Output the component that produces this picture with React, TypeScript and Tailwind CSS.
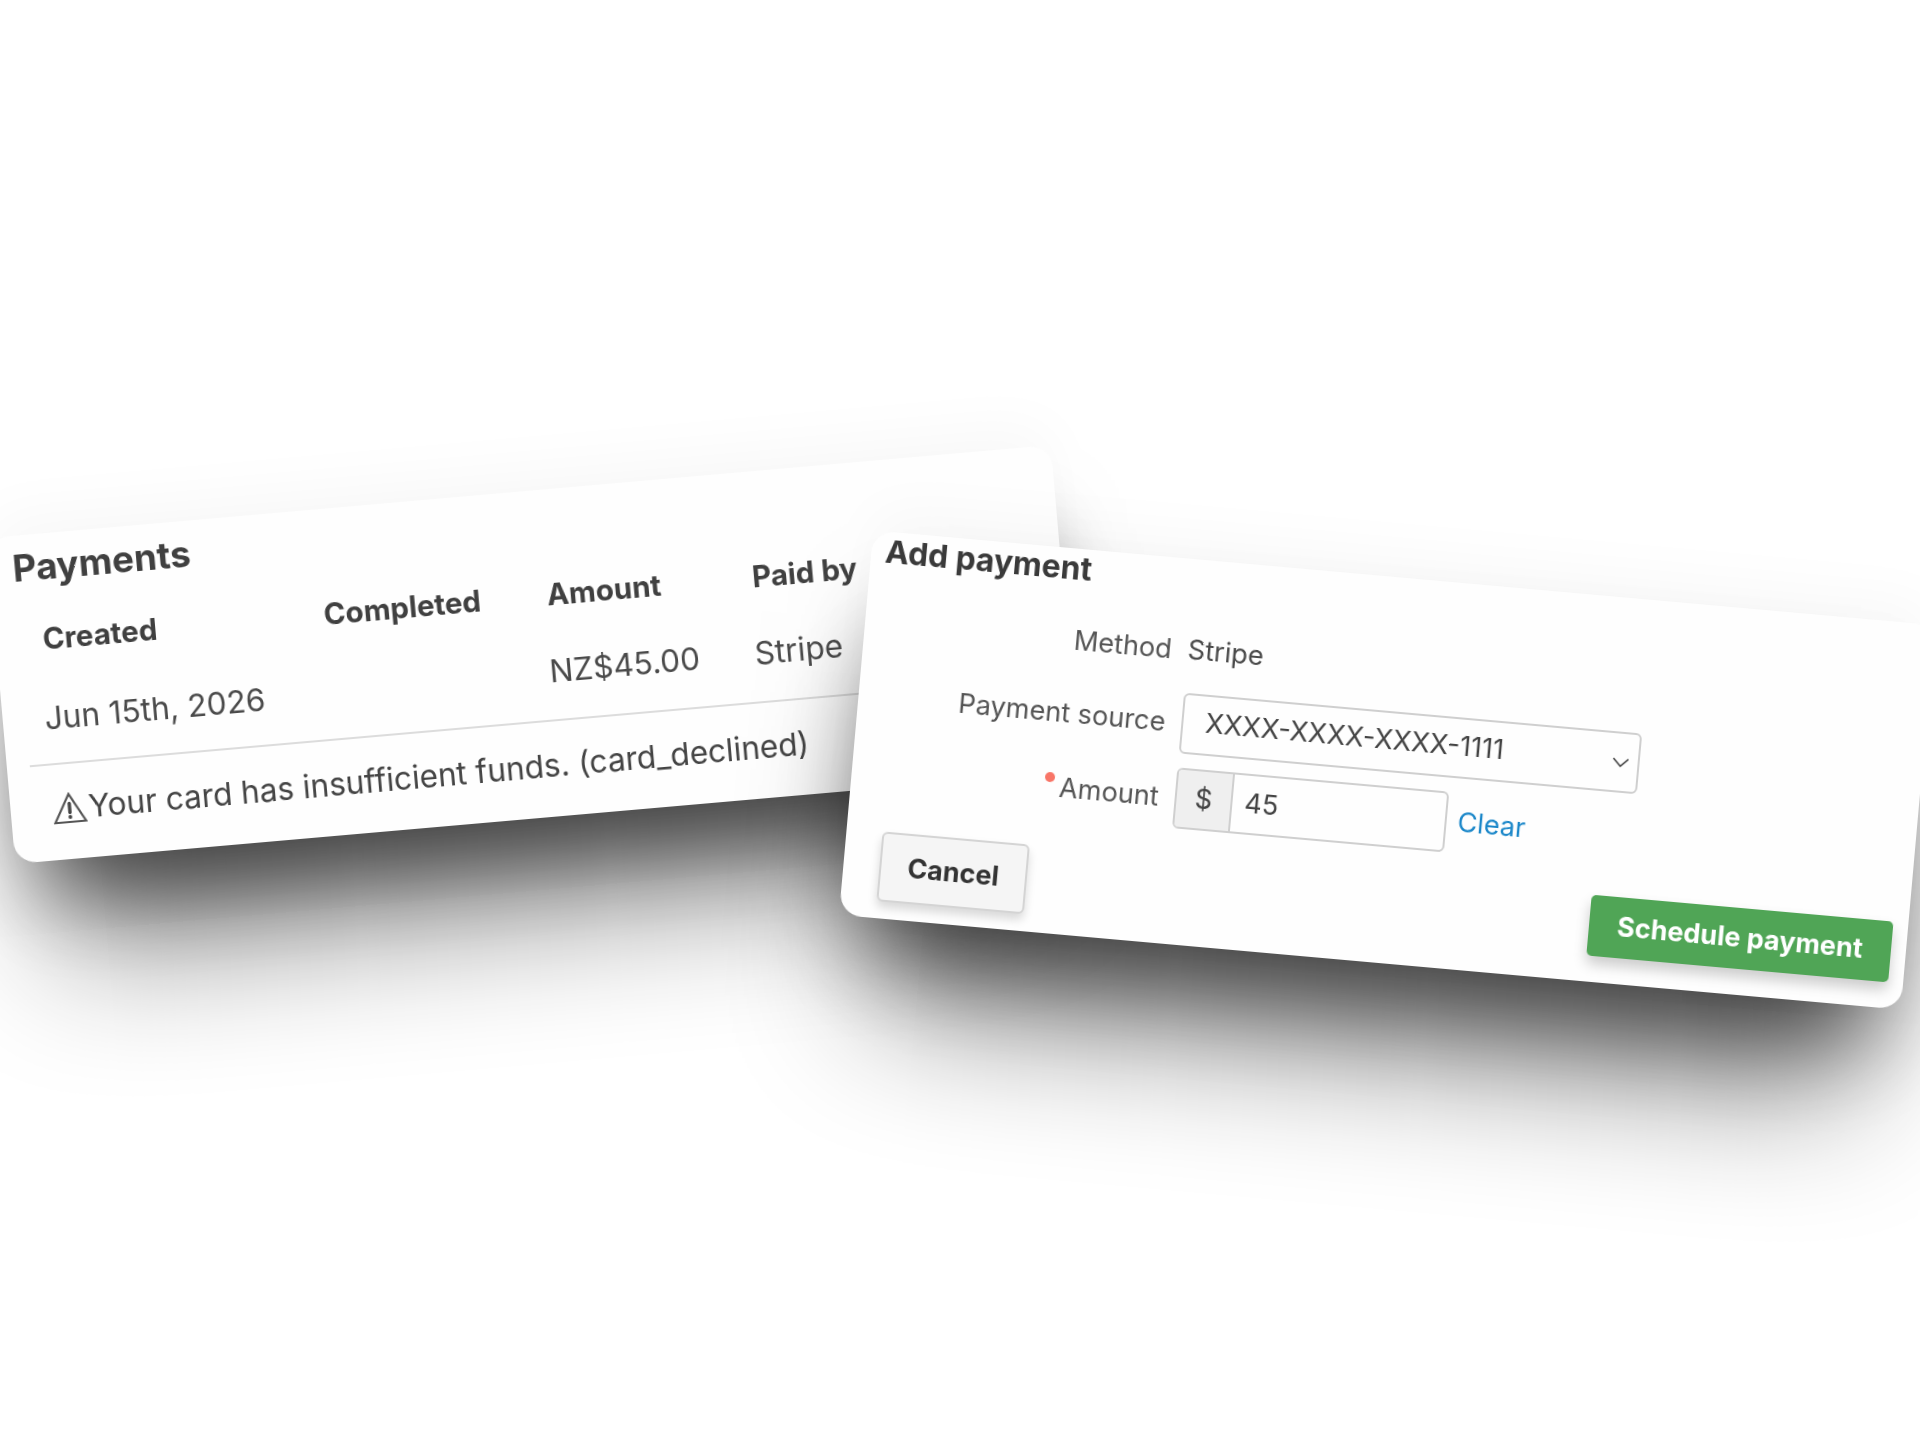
import { ChevronDown } from "lucide-react";

// ─── Warning icon ──────────────────────────────────────────────────────────────

function WarningTriangle() {
  return (
    <svg width="34" height="34" viewBox="0 0 34 34" fill="none" className="shrink-0">
      <path d="M17 3 L32.5 31 H1.5 Z" stroke="#555" strokeWidth="2.2" strokeLinejoin="miter" />
      <path d="M17 12.5 V21.5" stroke="#444" strokeWidth="3.4" strokeLinecap="round" />
      <circle cx="17" cy="26" r="1.9" fill="#444" />
    </svg>
  );
}

// ─── Payments card (back) ──────────────────────────────────────────────────────

function PaymentsCard() {
  return (
    <section className="absolute left-[-1px] top-[491px] h-[327px] w-[1068px] rotate-[-5deg] rounded-[22px] bg-[#fefefe] shadow-[0_60px_90px_-30px_rgba(0,0,0,0.6),0_130px_140px_-40px_rgba(0,0,0,0.48),0_-20px_60px_rgba(0,0,0,0.03)] will-change-transform">
      <div className="pl-[23px] pt-[11px] text-[#404040] blur-[0.3px]">
        <h2 className="text-[36.8px] font-bold leading-[44px]">Payments</h2>
        <div className="mt-[30px] grid grid-cols-[282px_224px_206px_1fr] pl-[24px] text-[29.5px] font-bold leading-[40px]">
          <div>Created</div>
          <div>Completed</div>
          <div>Amount</div>
          <div>Paid by</div>
        </div>
        <div className="mt-[40px] grid grid-cols-[283px_224px_206px_1fr] pl-[19px] text-[31.6px] font-normal leading-[40px] text-[#4a4a4a]">
          <div>Jun 15th, 2026</div>
          <div />
          <div className="-mt-[3px]">NZ$45.00</div>
          <div className="-mt-[3px]">Stripe</div>
        </div>
        <div className="mt-[25px] h-[2px] w-[1000px] bg-[#dcdcdc]" />
        <div className="mt-[24px] flex items-center gap-[2px] pl-[19px] text-[31.6px] leading-[40px] text-[#444]">
          <WarningTriangle />
          <span>Your card has insufficient funds. (card_declined)</span>
        </div>
      </div>
    </section>
  );
}

// ─── Add payment card (front) ──────────────────────────────────────────────────

function AddPaymentCard() {
  return (
    <section className="absolute left-[854px] top-[577px] h-[386px] w-[1066px] rotate-[5.1deg] rounded-[22px] bg-[#fefefe] shadow-[0_60px_90px_-30px_rgba(0,0,0,0.6),0_130px_140px_-40px_rgba(0,0,0,0.48),0_-20px_60px_rgba(0,0,0,0.03)] will-change-transform">
      <div className="flex flex-col pl-[36px] pr-[15px] pt-[2px] text-[27.2px] text-[#4a4a4a] blur-[0.3px]">
        <h2 className="-ml-[22px] text-[31.8px] font-bold leading-[36px] text-[#3a3a3a]">Add payment</h2>

        <div className="mt-[36px] grid grid-cols-[272px_1fr] items-center gap-x-[16px]">
          <div className="text-right leading-[36px] text-[#555]">Method</div>
          <div className="-mt-[2px] leading-[36px]">Stripe</div>
        </div>

        <div className="mt-[24px] grid grid-cols-[272px_1fr] items-center gap-x-[16px]">
          <div className="text-right leading-[36px] text-[#555]">Payment source</div>
          <div className="flex h-[61px] w-[460px] items-center justify-between rounded-[6px] border-2 border-[#cfcfcf] pl-[22px] pr-[3px] text-[#444]">
            <span className="-mt-[3px]">XXXX-XXXX-XXXX-1111</span>
            <ChevronDown size={28} strokeWidth={1.5} />
          </div>
        </div>

        <div className="mt-[14px] grid grid-cols-[272px_1fr] items-center gap-x-[16px]">
          <div className="text-right leading-[36px] text-[#555]">
            <span className="relative">
              <span className="absolute left-[-15px] top-[2px] h-[10px] w-[10px] rounded-full bg-[#f87567]" />
              Amount
            </span>
          </div>
          <div className="flex items-center gap-[11px]">
            <div className="flex h-[61px] w-[273px] overflow-hidden rounded-[6px] border-2 border-[#cfcfcf]">
              <div className="flex w-[56px] items-center justify-center border-r-2 border-[#cfcfcf] bg-[#efefef] text-[#444]">$</div>
              <div className="flex flex-1 items-center pl-[12px] text-[#444]">45</div>
            </div>
            <span className="text-[#1b87c9]">Clear</span>
          </div>
        </div>

        <div className="mt-[29px] flex items-start justify-between">
          <button className="h-[70px] w-[148px] rounded-[6px] border-2 border-[#d4d4d4] bg-[#f5f5f5] text-[27px] font-bold text-[#333] shadow-[0_6px_10px_rgba(0,0,0,0.15)]">
            Cancel
          </button>
          <button className="h-[61px] w-[303px] rounded-[5px] bg-[#50a556] text-[27px] font-bold text-white shadow-[0_8px_14px_rgba(0,0,0,0.2)]">
            Schedule payment
          </button>
        </div>
      </div>
    </section>
  );
}

export default function App() {
  return (
    <main className="relative h-[1440px] w-[1920px] overflow-hidden bg-white font-['Inter',sans-serif]">
      <PaymentsCard />
      <AddPaymentCard />
    </main>
  );
}
